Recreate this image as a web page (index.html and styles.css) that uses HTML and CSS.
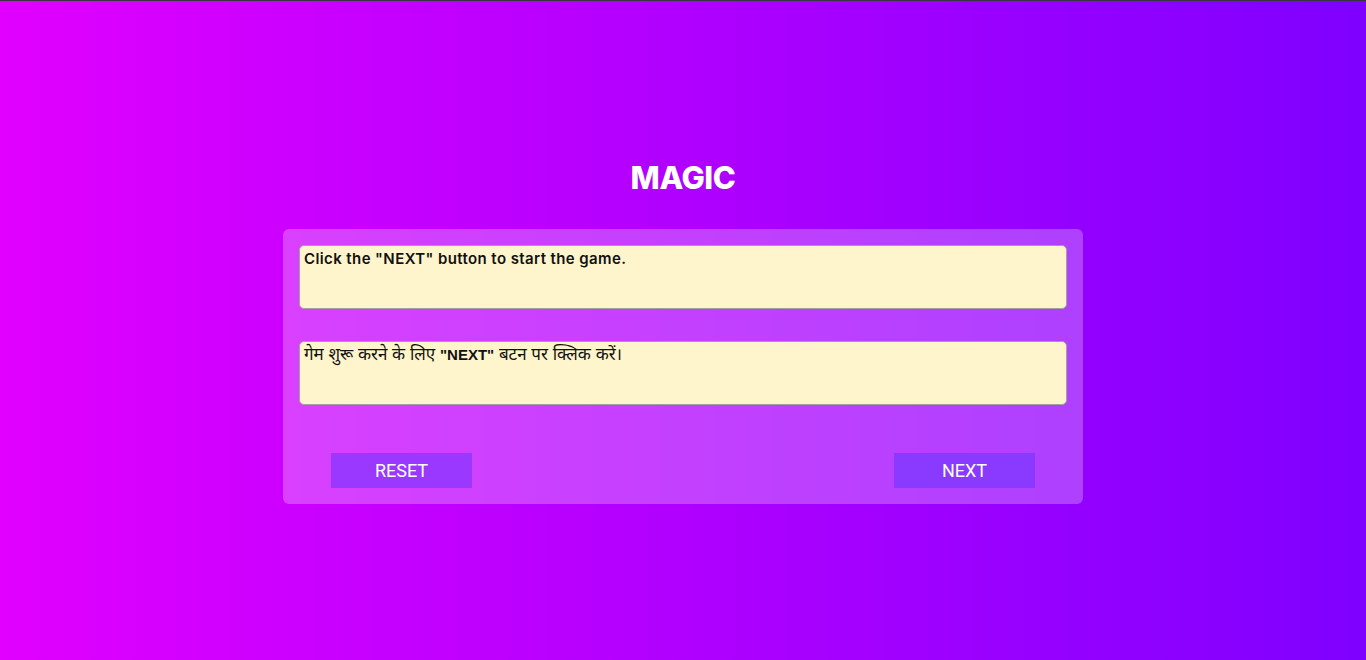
FILE: index.html
```html
<!DOCTYPE html>
<html lang="en">
<head>
<meta charset="utf-8">
<title>Magic</title>
<link rel="stylesheet" href="styles.css">
</head>
<body>
<main class="page">
  <h1 class="title">MAGIC</h1>
  <section class="card">
    <div class="box box-en">Click the "NEXT" button to start the game.</div>
    <div class="box box-hi">गेम शुरू करने के लिए <b>"NEXT"</b> बटन पर क्लिक करें।</div>
    <div class="actions">
      <button class="btn btn-reset">RESET</button>
      <button class="btn btn-next">NEXT</button>
    </div>
  </section>
</main>
</body>
</html>
```
FILE: styles.css
```css
html, body {
  margin: 0;
  padding: 0;
}
body {
  background: linear-gradient(to right, #e100ff, #7f00ff);
  border-top: 1px solid #3a3340;
  min-height: 659px;
  font-family: "Inter", "Roboto", sans-serif;
}
.page {
  min-height: 659px;
  display: flex;
  flex-direction: column;
  align-items: center;
  justify-content: center;
  padding-top: 1px;
  box-sizing: border-box;
}
.title {
  margin: 0 0 31px;
  font-size: 31px;
  line-height: 40px;
  font-weight: 800;
  color: #fff;
  letter-spacing: -0.4px;
}
.card {
  width: 800px;
  box-sizing: border-box;
  padding: 16px;
  background: rgba(255, 255, 255, 0.25);
  border-radius: 6px;
  display: flex;
  flex-direction: column;
}
.box {
  height: 64px;
  box-sizing: border-box;
  background: #fff5cc;
  border: 1px solid #a5a0a0;
  border-radius: 5px;
  padding: 3px 4px;
  color: #111;
}
.box-en {
  font-size: 15px;
  font-weight: 600;
  line-height: 20px;
  letter-spacing: 0.4px;
}
.box-hi {
  margin-top: 32px;
  font-family: "Liberation Sans", "Noto Sans", sans-serif;
  font-size: 17px;
  line-height: 20px;
}
.box-hi b {
  font-size: 15px;
}
.actions {
  margin-top: 48px;
  padding: 0 32px;
  display: flex;
  justify-content: space-between;
}
.btn {
  width: 141px;
  height: 35px;
  border: none;
  color: #fff;
  font-family: "Roboto", "Inter", sans-serif;
  font-size: 18px;
  cursor: pointer;
  padding: 0;
}
.btn-reset {
  background: #9a38ff;
}
.btn-next {
  background: #8a3aff;
}
```
